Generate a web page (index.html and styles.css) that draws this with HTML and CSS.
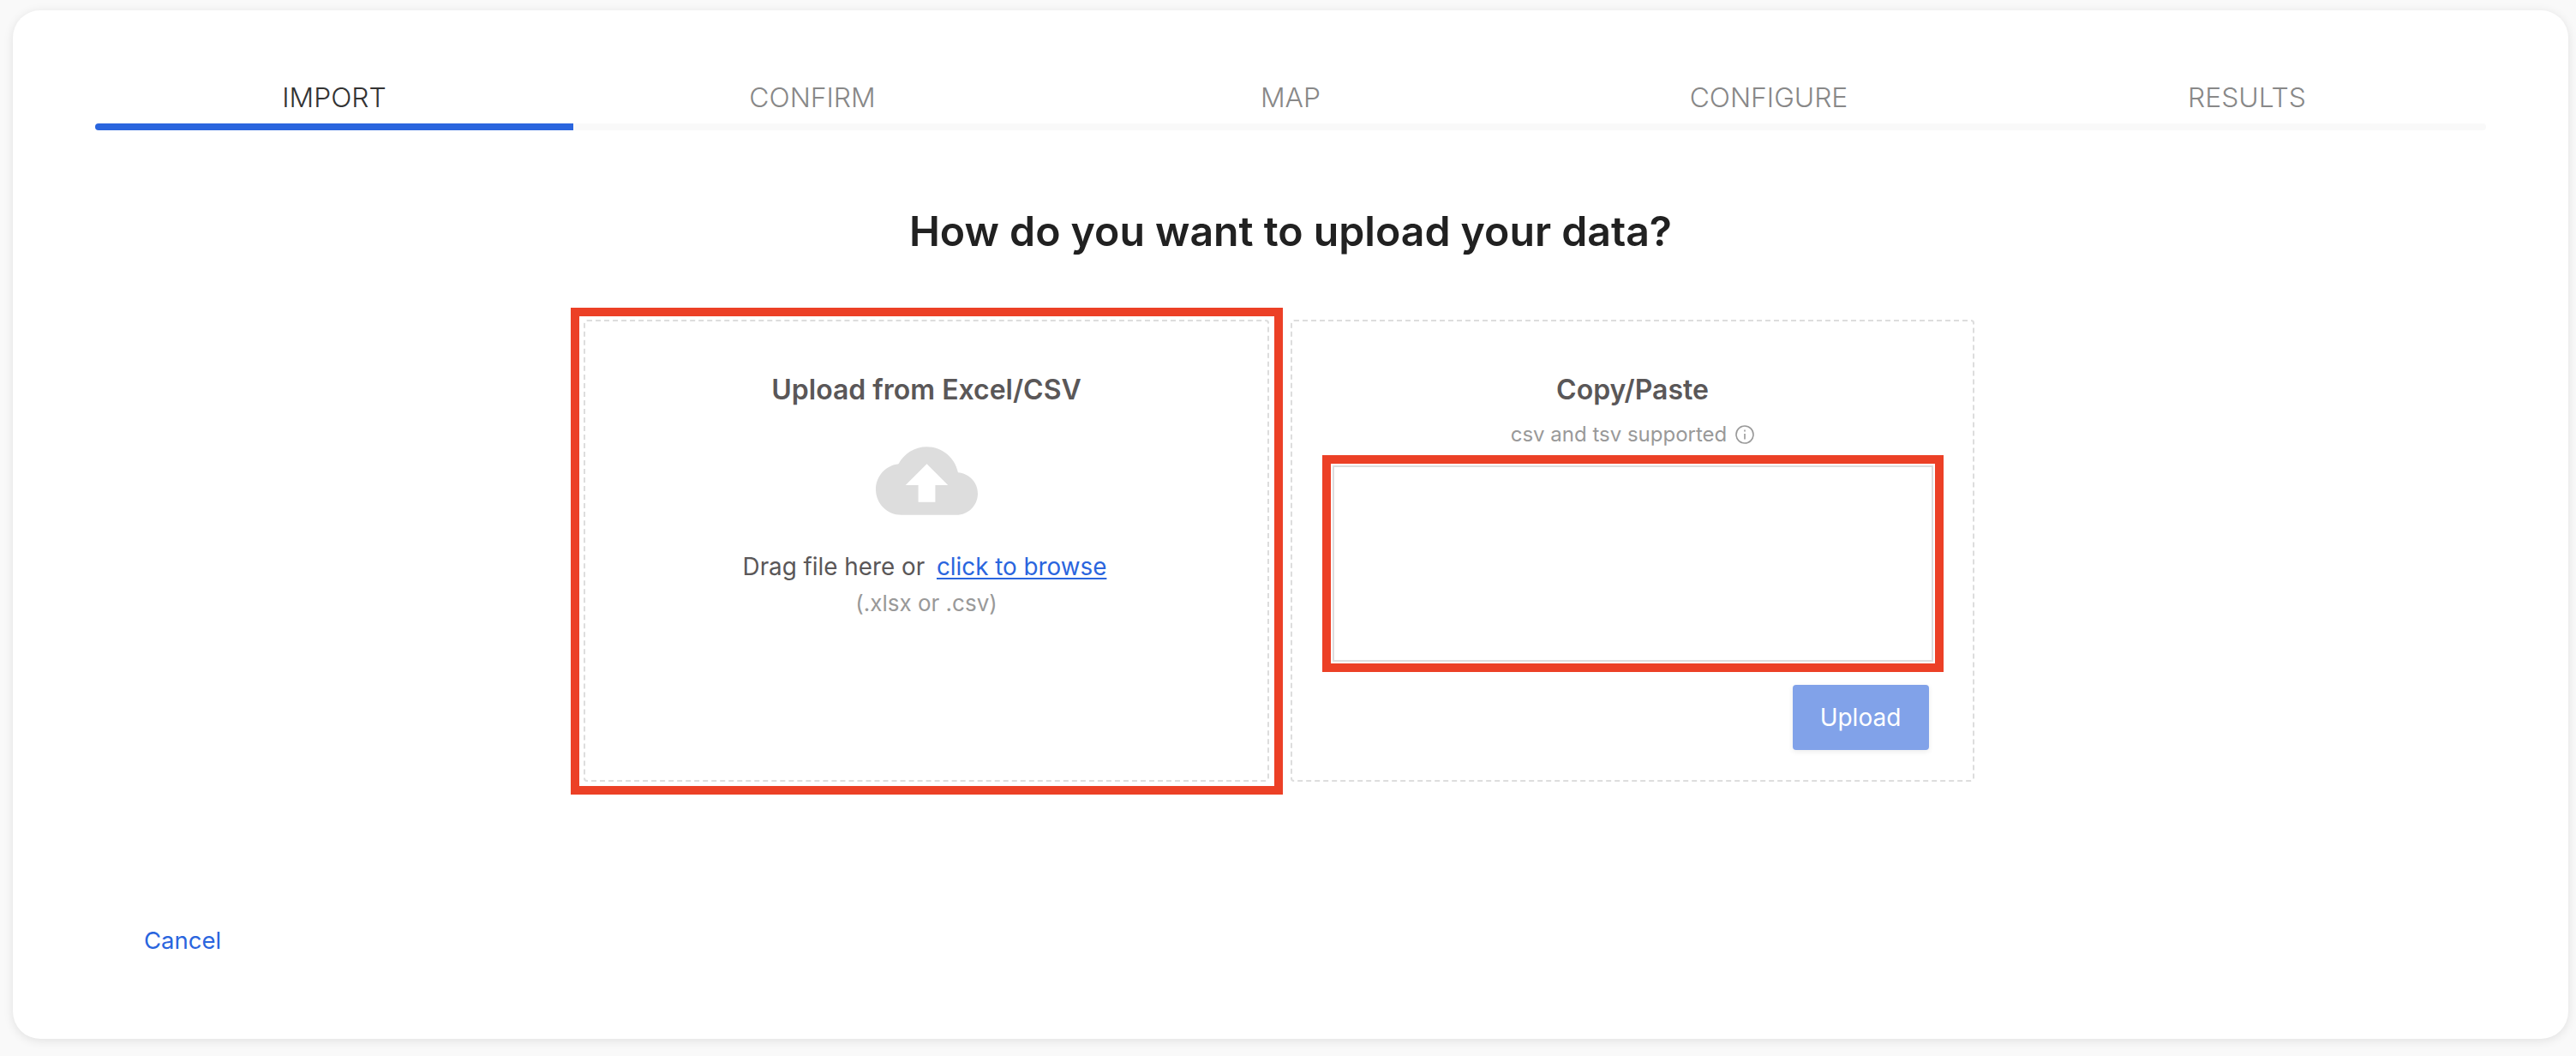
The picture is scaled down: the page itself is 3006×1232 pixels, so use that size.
FILE: index.html
```html
<!DOCTYPE html>
<html lang="en">
<head>
<meta charset="utf-8">
<title>Import</title>
<link rel="stylesheet" href="styles.css">
</head>
<body>
<main class="card">
  <nav class="steps">
    <div class="step step-active"><span class="step-label">IMPORT</span><span class="step-bar"></span></div>
    <div class="step"><span class="step-label">CONFIRM</span><span class="step-bar"></span></div>
    <div class="step"><span class="step-label">MAP</span><span class="step-bar"></span></div>
    <div class="step"><span class="step-label">CONFIGURE</span><span class="step-bar"></span></div>
    <div class="step"><span class="step-label">RESULTS</span><span class="step-bar"></span></div>
  </nav>
  <h1 class="heading">How do you want to upload your data?</h1>
  <section class="options">
    <div class="box box-left">
      <h2 class="box-title">Upload from Excel/CSV</h2>
      <svg class="cloud" viewBox="0 4 24 16" aria-hidden="true"><path d="M19.35 10.04C18.67 6.59 15.64 4 12 4 9.11 4 6.6 5.64 5.35 8.04 2.34 8.36 0 10.91 0 14c0 3.31 2.69 6 6 6h13c2.76 0 5-2.24 5-5 0-2.64-2.05-4.78-4.65-4.96zM14 13v4h-4v-4H7l5-5 5 5h-3z"/></svg>
      <p class="drag">Drag file here or <a class="browse" href="#">click to browse</a></p>
      <p class="formats">(.xlsx or .csv)</p>
    </div>
    <div class="box box-right">
      <h2 class="box-title">Copy/Paste</h2>
      <p class="support">csv and tsv supported
        <svg class="info" viewBox="0 0 22 22" aria-hidden="true"><circle cx="11" cy="11" r="10"/><path d="M11 10v6.5M11 5.5v2"/></svg>
      </p>
      <textarea class="paste"></textarea>
      <div class="actions"><button class="upload" type="button">Upload</button></div>
    </div>
  </section>
  <a class="cancel" href="#">Cancel</a>
</main>
</body>
</html>
```
FILE: styles.css
```css
* { box-sizing: border-box; }
html, body { margin: 0; height: 100%; }
body {
  background: #f9f9f9;
  padding: 12px 9px 20px 15px;
  font-family: Inter, "Liberation Sans", sans-serif;
  overflow: hidden;
}
.card {
  height: 1200px;
  background: #fff;
  border-radius: 32px;
  box-shadow: 0 2px 12px rgba(0, 0, 0, 0.1);
  padding: 81px 96px 0;
}
.steps { display: flex; }
.step { flex: 1 1 0; display: flex; flex-direction: column; align-items: center; }
.step-label {
  font-size: 31.8px;
  font-weight: 300;
  line-height: 40px;
  color: #888;
  margin: 1px 0 10px;
}
.step-active .step-label { color: #333; }
.step-bar { display: block; width: 100%; height: 8px; background: #f9f9f9; }
.step:first-child .step-bar { border-radius: 4px 0 0 4px; }
.step:last-child .step-bar { border-radius: 0 4px 4px 0; }
.step-active .step-bar { background: #2a65de; }
.heading {
  margin: 88px 0 0;
  font-size: 48.2px;
  line-height: 60px;
  font-weight: 600;
  color: #212121;
  text-align: center;
}
.options { display: flex; gap: 25px; margin: 73px 0 0 570px; }
.box {
  position: relative;
  height: 539px;
  border: 2px dashed #ddd;
  border-radius: 4px;
  display: flex;
  flex-direction: column;
  align-items: center;
  padding: 60px 46px 0;
}
.box-left { width: 800px; }
.box-left::after {
  content: "";
  position: absolute;
  inset: -16px -18px -17px -17px;
  border: 10px solid #ec4026;
  pointer-events: none;
}
.box-right { width: 798px; }
.box-title {
  margin: 0;
  font-size: 32px;
  line-height: 40px;
  font-weight: 600;
  color: #5a5758;
}
.cloud { width: 119px; height: 80px; margin-top: 46px; fill: #ddd; }
.drag {
  margin: 40px 4px 0 0;
  font-size: 27.8px;
  line-height: 40px;
  color: #5a5758;
  white-space: pre-wrap;
}
.browse { color: #2a65de; margin-left: 6px; text-decoration-thickness: 2px; text-underline-offset: 3px; }
.formats { margin: 5px 0 0; font-size: 26px; line-height: 36px; color: #999; }
.support {
  margin: 17px 0 0;
  display: flex;
  align-items: center;
  gap: 10px;
  font-size: 24px;
  line-height: 30px;
  color: #999;
}
.info { width: 22px; height: 22px; fill: none; stroke: #999; stroke-width: 1.6; }
.paste {
  display: block;
  width: 701px;
  height: 229px;
  margin-top: 21px;
  border: 2px solid #ddd;
  background: #fff;
  resize: none;
  outline: 10px solid #ec4026;
  outline-offset: 2px;
}
.actions { width: 701px; display: flex; justify-content: flex-end; margin-top: 27px; padding-right: 5px; }
.upload {
  width: 159px;
  height: 76px;
  border: 0;
  border-radius: 4px;
  background: #81a2e9;
  color: #fff;
  font: 400 28px Inter, "Liberation Sans", sans-serif;
  box-shadow: 0 2px 6px rgba(0, 0, 0, 0.08);
}
.cancel {
  display: inline-block;
  margin: 165px 0 0 57px;
  font-size: 27.5px;
  line-height: 40px;
  color: #2a65de;
  text-decoration: none;
}
```
